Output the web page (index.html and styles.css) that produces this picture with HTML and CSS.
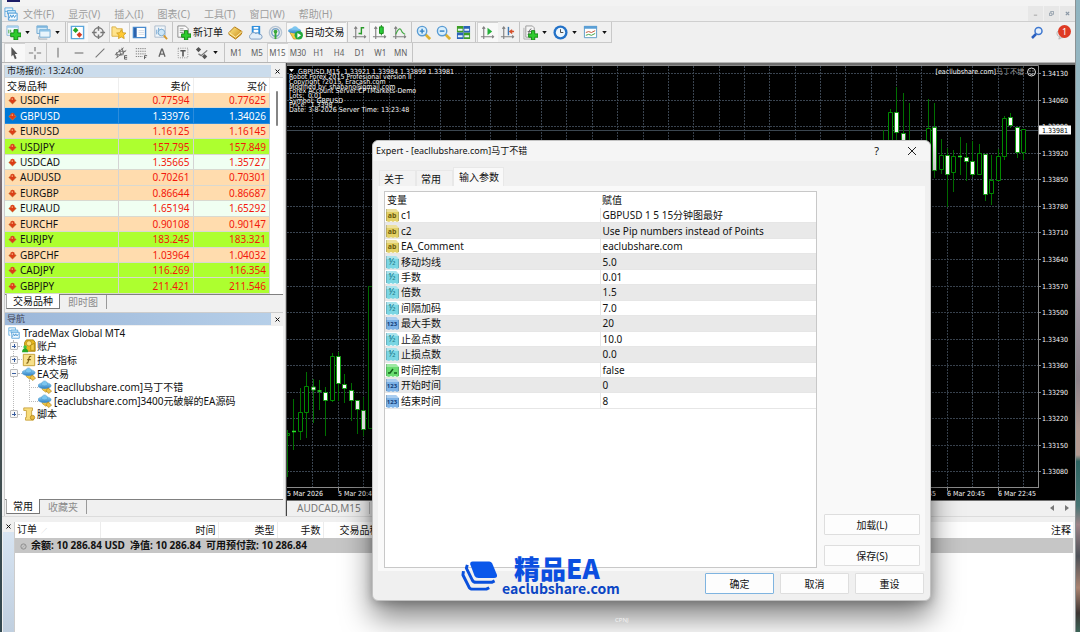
FILE: index.html
```html
<!DOCTYPE html>
<html lang="zh-CN">
<head>
<meta charset="utf-8">
<title>TradeMax Global MT4</title>
<link rel="stylesheet" href="styles.css">
</head>
<body>
<svg class="defs" aria-hidden="true">
  <defs>
    <linearGradient id="gGold" x1="0" y1="0" x2="1" y2="1"><stop offset="0" stop-color="#ffe98a"/><stop offset="1" stop-color="#c98a12"/></linearGradient>
    <linearGradient id="gBlue" x1="0" y1="0" x2="0" y2="1"><stop offset="0" stop-color="#8fd0f5"/><stop offset="1" stop-color="#2b7fc4"/></linearGradient>
    <symbol id="i-app" viewBox="0 0 16 16"><path d="M1 1h9v4H1zM1 5v6h2" fill="#e6f4fd" stroke="#5aa6dc"/><path d="M4 4h9v4H4z" fill="#bfe2f7" stroke="#5aa6dc"/><path d="M5 7h10v8H5z" fill="#f4fbff" stroke="#3f92d2"/><path d="M6 13l1.500-4 1.500 3 1.500-3 1.500 3 2-3" fill="none" stroke="#3f92d2"/></symbol>
    <symbol id="i-newchart" viewBox="0 0 16 16"><path d="M1 1h12v10H1z" fill="#f3faff" stroke="#8fb9d8"/><path d="M1 1h12v2H1z" fill="#a5cfec"/><path d="M3 9V5M5 8V5" stroke="#3aa33a"/><path d="M8.500 5h4v3.500H16v4h-3.500V16h-4v-3.500H5v-4h3.500z" fill="#2ecb2e" stroke="#118511"/></symbol>
    <symbol id="i-profiles" viewBox="0 0 16 16"><path d="M1 1h11v8H1z" fill="#d5ebf8" stroke="#6fa8d0"/><path d="M1 1h11v2H1z" fill="#7db5dd"/><path d="M4 5h11v8H4z" fill="#e9f5fc" stroke="#6fa8d0"/><path d="M4 5h11v2H4z" fill="#8cc2e6"/><path d="M3 12v3h9" fill="none" stroke="#9faab2"/></symbol>
    <symbol id="i-market" viewBox="0 0 16 16"><path d="M1.500 1.500h13v13h-13z" fill="#fff" stroke="#5aa6dc" stroke-width="1.500"/><path d="M6 2.500l3 3-3 3-3-3z" fill="#25a525"/><path d="M10 7.500l3 3-3 3-3-3z" fill="#d63d22"/></symbol>
    <symbol id="i-target" viewBox="0 0 16 16"><circle cx="8" cy="8" r="5" fill="none" stroke="#777" stroke-width="1.500"/><path d="M8 1v5M8 10v5M1 8h5M10 8h5" stroke="#777" stroke-width="1.500"/></symbol>
    <symbol id="i-folderstar" viewBox="0 0 16 16"><path d="M1 2h4l1 2h6v8H1z" fill="#ffe38c" stroke="#d9b04a"/><path d="M11 5l1.600 3.200 3.400.4-2.500 2.400.6 3.500-3.100-1.700-3.100 1.700.6-3.500L6 8.600l3.400-.4z" fill="#ffc933" stroke="#c8961b" stroke-width=".8"/></symbol>
    <symbol id="i-window" viewBox="0 0 16 16"><path d="M1.500 2.500h13v11h-13z" fill="#fff" stroke="#4a8ccf" stroke-width="1.500"/><path d="M2 3h3v10H2z" fill="#2b62ad"/><path d="M7 6h6M7 8h6M7 10h6" stroke="#d5dde5"/></symbol>
    <symbol id="i-tester" viewBox="0 0 16 16"><path d="M2 1h11v12H2z" fill="#f0f5f9" stroke="#abc"/><path d="M4 10V5M6 9V3M9 8V4" stroke="#6ba3d2"/><circle cx="9" cy="8" r="3.500" fill="#cce6f8" stroke="#7ba9cc"/><path d="M11.500 11l3.500 4" stroke="#d79a2d" stroke-width="2"/></symbol>
    <symbol id="i-order" viewBox="0 0 16 16"><path d="M2 1h8l3 3v9H2z" fill="#fafafa" stroke="#888"/><path d="M4 4h4M4 6h6M4 8h4" stroke="#999"/><path d="M9 6h3.500v3.500H16V13h-3.500v3H9v-3H6V9.500h3z" fill="#2ecb2e" stroke="#118511"/></symbol>
    <symbol id="i-gold" viewBox="0 0 16 16"><path d="M1 8l6-6 8 5-1 3-6 5-7-5z" fill="url(#gGold)" stroke="#b27408"/><path d="M1 8l7 5 7-6" fill="none" stroke="#fff0b0"/></symbol>
    <symbol id="i-cloud" viewBox="0 0 16 16"><path d="M4 1h9v9H4z" fill="#2f8fdd"/><path d="M6 2h5v2H6zM6 5h5v3H6z" fill="#fff"/><path d="M3 15a3 3 0 0 1 0-5 3 3 0 0 1 5-1 3 3 0 0 1 4 1 2.500 2.500 0 0 1 1 5z" fill="#e2eef8" stroke="#7c9cc0"/></symbol>
    <symbol id="i-signal" viewBox="0 0 16 16"><g fill="none" stroke-width="1.500"><circle cx="8" cy="8" r="6.500" stroke="#b7c5d3"/><circle cx="8" cy="8" r="4" stroke="#7ba4c9"/></g><circle cx="8" cy="7" r="2" fill="#38a838"/><path d="M8 8v7" stroke="#38a838" stroke-width="2"/></symbol>
    <symbol id="i-ea" viewBox="0 0 16 16"><path d="M5 8h6l2 3-4 3-4-3z" fill="#f5c842" stroke="#b98a1b" stroke-width=".7"/><ellipse cx="7.500" cy="6.500" rx="7.500" ry="3.500" fill="url(#gBlue)" stroke="#4b92c4" stroke-width=".5"/><path d="M4 5.500c0-6 7-6 7 0-2 1.500-5 1.500-7 0z" fill="#7cc6f0" stroke="#4b92c4" stroke-width=".5"/><path d="M11.500 9l4 3.500-3 3-3.500-3z" fill="#efc24a" stroke="#a87c15" stroke-width=".7"/></symbol>
    <symbol id="i-auto" viewBox="0 0 16 16"><path d="M2 8h10l-2 7H6z" fill="#f7cb45" stroke="#b98a1b" stroke-width=".7"/><ellipse cx="7" cy="6" rx="7" ry="3" fill="url(#gBlue)"/><path d="M4 5c0-5 7-5 7 0z" fill="#7cc6f0"/><circle cx="11.500" cy="11" r="4.500" fill="#22a93c"/><path d="M10 8.500l4 2.500-4 2.500z" fill="#fff"/></symbol>
    <symbol id="i-axes" viewBox="0 0 16 16"><path d="M4 2v13M1 12.500h14M2.500 4L4 2l1.500 2M13 11l1.500 1.500L13 14" fill="none" stroke="#808080" stroke-width="1.200"/></symbol>
    <symbol id="i-bars" viewBox="0 0 16 16"><use href="#i-axes"/><path d="M10 2v8M10 3h3M7 9h3" stroke="#2a9a2a" stroke-width="1.500"/></symbol>
    <symbol id="i-candle" viewBox="0 0 16 16"><use href="#i-axes"/><path d="M10 0v11" stroke="#1a8a1a"/><path d="M8 2h4v7H8z" fill="#29cc3a" stroke="#1a8a1a"/></symbol>
    <symbol id="i-line" viewBox="0 0 16 16"><use href="#i-axes"/><path d="M4 10c3-7 5-7 6-4s3 3 4 4" fill="none" stroke="#43a843" stroke-width="1.300"/></symbol>
    <symbol id="i-zoomin" viewBox="0 0 16 16"><path d="M10 10l5 5" stroke="#ddb12f" stroke-width="3"/><circle cx="6.500" cy="6.500" r="5" fill="#d9effc" stroke="#5a9cd4" stroke-width="1.500"/><path d="M4 6.500h5M6.500 4v5" stroke="#2f7fc4" stroke-width="1.500"/></symbol>
    <symbol id="i-zoomout" viewBox="0 0 16 16"><path d="M10 10l5 5" stroke="#ddb12f" stroke-width="3"/><circle cx="6.500" cy="6.500" r="5" fill="#d9effc" stroke="#5a9cd4" stroke-width="1.500"/><path d="M4 6.500h5" stroke="#2f7fc4" stroke-width="1.500"/></symbol>
    <symbol id="i-tile" viewBox="0 0 16 16"><path d="M1 1h7v7H1zM8 8h7v7H8z" fill="#3c9e25"/><path d="M8 1h7v7H8zM1 8h7v7H1z" fill="#2a62b8"/><path d="M2 4h5v2H2zM9 4h5v2H9zM2 11h5v2H2zM9 11h5v2H9z" fill="#e9f4fb"/></symbol>
    <symbol id="i-scroll" viewBox="0 0 16 16"><use href="#i-axes"/><path d="M8 3l5 4-5 4z" fill="#26b03a"/></symbol>
    <symbol id="i-shift" viewBox="0 0 16 16"><use href="#i-axes"/><path d="M9 2v9" stroke="#3a78b5" stroke-width="1.500"/><path d="M15 7h-4M13 5l-2.500 2 2.500 2" fill="none" stroke="#d6502b" stroke-width="1.500"/></symbol>
    <symbol id="i-indic" viewBox="0 0 16 16"><path d="M3 1h7l2 2v10H3z" fill="#f5f5f5" stroke="#999"/><path d="M1 3v12h8" fill="none" stroke="#aaa"/><path d="M5 10c2 0 1-6 4-6M5 7h4" fill="none" stroke="#666"/><path d="M9 6h3.500v3.500H16V13h-3.500v3H9v-3H6V9.500h3z" fill="#2ecb2e" stroke="#118511"/></symbol>
    <symbol id="i-clock" viewBox="0 0 16 16"><circle cx="8" cy="8" r="7.500" fill="#2372c8"/><circle cx="8" cy="8" r="5" fill="#eef7fd"/><path d="M8 4.500V8h3" fill="none" stroke="#444"/></symbol>
    <symbol id="i-template" viewBox="0 0 16 16"><path d="M1.500 1.500h13v12h-13z" fill="#fff" stroke="#5b9ac6"/><path d="M1 1h14v3H1z" fill="#5b9fd5"/><path d="M3 8l3-1 3 1 4-2" fill="none" stroke="#c05030"/><path d="M3 11l3-1 3 1 4-2" fill="none" stroke="#3c9e3c"/></symbol>
    <symbol id="i-pointer" viewBox="0 0 16 16"><path d="M5 1l7 8H9l2 5-2 1-2-5-2 2z" fill="#555"/></symbol>
    <symbol id="i-cross" viewBox="0 0 16 16"><path d="M8 1v5M8 10v5M1 8h5M10 8h5" stroke="#777" stroke-width="1.300"/></symbol>
    <symbol id="i-vline" viewBox="0 0 16 16"><path d="M8 2v11" stroke="#777" stroke-width="1.300"/></symbol>
    <symbol id="i-hline" viewBox="0 0 16 16"><path d="M3 8h10" stroke="#777" stroke-width="1.300"/></symbol>
    <symbol id="i-trend" viewBox="0 0 16 16"><path d="M3 13L13 3" stroke="#777" stroke-width="1.300"/></symbol>
    <symbol id="i-channel" viewBox="0 0 16 16"><path d="M1 10L11 2M2 14L14 5M3 7l1 6M6 4l2 7M9 2l2 7M2 10h9M5 6h8" stroke="#666"/><path d="M15 11h-3v4h3M12 13h3" fill="none" stroke="#555"/></symbol>
    <symbol id="i-fib" viewBox="0 0 16 16"><path d="M2 3h12M2 6h12M2 9h12M2 12h8" stroke="#777" stroke-dasharray="1.500 1"/><path d="M12 15v-4h3M12 13h2" fill="none" stroke="#555"/></symbol>
    <symbol id="i-text" viewBox="0 0 16 16"><path d="M4 13L7.500 3h1L12 13M5.500 9.500h5" fill="none" stroke="#666" stroke-width="1.800"/></symbol>
    <symbol id="i-label" viewBox="0 0 16 16"><path d="M2.500 2.500h11v11h-11z" fill="none" stroke="#777" stroke-dasharray="1 1.500"/><path d="M5 5.500h6M8 5.500V12" stroke="#555" stroke-width="1.800"/></symbol>
    <symbol id="i-arrows" viewBox="0 0 16 16"><path d="M4 1l3 3-3 3-3-3zM11 9l3 3-3 3-3-3z" fill="#555"/><path d="M4 9l3 2 7-6" fill="none" stroke="#777" stroke-width="1.500"/></symbol>
    <symbol id="i-caret" viewBox="0 0 6 4"><path d="M0 0h6L3 4z" fill="#111"/></symbol>
    <symbol id="i-down" viewBox="0 0 10 10"><path d="M5 .5L9.500 5 5 9.500.5 5z" fill="#c9793f"/><path d="M3 1.500h4v3h2L5 8.500 1 4.500h2z" fill="#dc3c16"/><path d="M4 2.500h1.500v2H4z" fill="#f79a6c"/></symbol>
    <symbol id="i-x" viewBox="0 0 10 10"><path d="M1 1l8 8M9 1L1 9" fill="none" stroke="currentColor" stroke-width="2"/></symbol>
    <symbol id="i-user" viewBox="0 0 16 16"><path d="M5 1h8l2 3v10H6L3 10V4z" fill="#e8b81d" stroke="#a17a08"/><circle cx="8" cy="5" r="3" fill="#ffe37a" stroke="#a17a08" stroke-width=".7"/><path d="M10 7l4-2v8h-4z" fill="#f2ce4a" stroke="#a17a08" stroke-width=".7"/><circle cx="3.500" cy="9" r="2" fill="#3fc63f"/><path d="M0 15c0-6 7-6 7 0z" fill="#27a827"/></symbol>
    <symbol id="i-fx" viewBox="0 0 16 16"><path d="M1.500 1.500h13v13h-13z" fill="#f7e08a" stroke="#c29a2a"/><path d="M10.500 4c-2-1-2.500 1-3 4s-1 4-2.500 3.500M6 7.500h4" fill="none" stroke="#7a5c10" stroke-width="1.300"/></symbol>
    <symbol id="i-script" viewBox="0 0 16 16"><path d="M2 1h10v3h-1v8h2v3H4v-3h1V4H2z" fill="#f7dc7c" stroke="#c8a03a"/><circle cx="12" cy="12" r="2.500" fill="#e9b93c" stroke="#a87c15" stroke-width=".8"/></symbol>
    <symbol id="i-file" viewBox="0 0 13 13"><path d="M0 0h10l3 3v9l-2 1-2-1-2 1-2-1-2 1-3-1z" fill="currentColor"/><path d="M0 0h10l3 3H0z" fill="#fff" fill-opacity=".35"/><path d="M.5 0v12M12.500 3v9" fill="none" stroke="#234" stroke-opacity=".22"/></symbol>
  </defs>
</svg>

<div class="desktop">
  <div class="wall wall-left"></div>
  <main class="app">
    <div class="titlebar"><span class="title-icon"></span></div>

    <div class="menubar">
      <svg class="ico14"><use href="#i-app"/></svg>
      <nav class="menus">
        <button>文件(F)</button><button>显示(V)</button><button>插入(I)</button><button>图表(C)</button><button>工具(T)</button><button>窗口(W)</button><button>帮助(H)</button>
      </nav>
      <div class="mdi">
        <button aria-label="最小化"><svg viewBox="0 0 6 6"><path d="M1 5h4" stroke="#999"/></svg></button>
        <button aria-label="还原"><svg viewBox="0 0 6 6"><path d="M.5 2.500h3v3h-3zM2 2V.5h3.500V4H4" fill="none" stroke="#8a97a5"/></svg></button>
        <button aria-label="关闭"><svg viewBox="0 0 6 6"><path d="M1 1l4 4M5 1L1 5" stroke="#8a97a5" stroke-width="1.500"/></svg></button>
      </div>
    </div>

    <div class="tools">
      <div class="toolbar bar-top">
        <button class="drop" aria-label="新图表"><svg class="ico"><use href="#i-newchart"/></svg><svg class="caret"><use href="#i-caret"/></svg></button>
        <button class="drop" aria-label="配置文件"><svg class="ico"><use href="#i-profiles"/></svg><svg class="caret"><use href="#i-caret"/></svg></button>
        <i class="sep"></i>
        <div class="group g-panels">
          <button class="on" aria-label="市场报价"><svg class="ico"><use href="#i-market"/></svg></button>
          <button aria-label="数据窗口"><svg class="ico"><use href="#i-target"/></svg></button>
          <button class="on" aria-label="导航"><svg class="ico"><use href="#i-folderstar"/></svg></button>
          <button class="on" aria-label="终端"><svg class="ico"><use href="#i-window"/></svg></button>
          <button aria-label="策略测试"><svg class="ico"><use href="#i-tester"/></svg></button>
        </div>
        <i class="sep"></i>
        <button class="wide"><svg class="ico"><use href="#i-order"/></svg>新订单</button>
        <div class="group g-three">
          <button aria-label="MetaEditor"><svg class="ico"><use href="#i-gold"/></svg></button>
          <button aria-label="云"><svg class="ico"><use href="#i-cloud"/></svg></button>
          <button aria-label="信号"><svg class="ico"><use href="#i-signal"/></svg></button>
        </div>
        <button class="wide auto on"><svg class="ico"><use href="#i-auto"/></svg>自动交易</button>
        <i class="sep"></i>
        <div class="group g-three">
          <button aria-label="柱状图"><svg class="ico"><use href="#i-bars"/></svg></button>
          <button class="on" aria-label="阴阳烛"><svg class="ico"><use href="#i-candle"/></svg></button>
          <button aria-label="折线图"><svg class="ico"><use href="#i-line"/></svg></button>
        </div>
        <i class="sep"></i>
        <div class="group g-three">
          <button aria-label="放大"><svg class="ico"><use href="#i-zoomin"/></svg></button>
          <button aria-label="缩小"><svg class="ico"><use href="#i-zoomout"/></svg></button>
          <button aria-label="平铺"><svg class="ico"><use href="#i-tile"/></svg></button>
        </div>
        <i class="sep"></i>
        <div class="group g-two">
          <button class="on" aria-label="自动滚动"><svg class="ico"><use href="#i-scroll"/></svg></button>
          <button aria-label="图表平移"><svg class="ico"><use href="#i-shift"/></svg></button>
        </div>
        <i class="sep"></i>
        <button class="drop" aria-label="指标"><svg class="ico"><use href="#i-indic"/></svg><svg class="caret"><use href="#i-caret"/></svg></button>
        <button class="drop" aria-label="周期"><svg class="ico"><use href="#i-clock"/></svg><svg class="caret"><use href="#i-caret"/></svg></button>
        <button class="drop" aria-label="模板"><svg class="ico"><use href="#i-template"/></svg><svg class="caret"><use href="#i-caret"/></svg></button>
      </div>
      <div class="tool-end">
        <button aria-label="搜索"><svg class="ico14" viewBox="0 0 14 14"><circle cx="8.500" cy="5" r="3.500" fill="#e8f1fc" stroke="#3f78cf" stroke-width="1.500"/><path d="M6 8l-4 4" stroke="#2a5fc0" stroke-width="2.500"/></svg></button>
        <button class="chat" aria-label="消息"><svg class="ico" viewBox="0 0 16 16"><ellipse cx="7" cy="9" rx="6" ry="4.500" fill="#f0f0f0" stroke="#b5b5b5"/><path d="M4 12l-1 3 4-2" fill="#ddd" stroke="#b5b5b5"/></svg><span class="badge">1</span></button>
      </div>
    </div>

    <div class="toolbar bar-low">
      <div class="group g-two">
        <button class="on" aria-label="光标"><svg class="ico14"><use href="#i-pointer"/></svg></button>
        <button aria-label="十字准线"><svg class="ico14"><use href="#i-cross"/></svg></button>
      </div>
      <i class="sep"></i>
      <div class="group g-draw">
        <button aria-label="垂直线"><svg class="ico14"><use href="#i-vline"/></svg></button>
        <button aria-label="水平线"><svg class="ico14"><use href="#i-hline"/></svg></button>
        <button aria-label="趋势线"><svg class="ico14"><use href="#i-trend"/></svg></button>
        <button aria-label="通道"><svg class="ico14"><use href="#i-channel"/></svg></button>
        <button aria-label="斐波那契"><svg class="ico14"><use href="#i-fib"/></svg></button>
        <button aria-label="文本"><svg class="ico12"><use href="#i-text"/></svg></button>
        <button aria-label="文本标签"><svg class="ico14"><use href="#i-label"/></svg></button>
      </div>
      <button class="drop" aria-label="箭头"><svg class="ico14"><use href="#i-arrows"/></svg><svg class="caret"><use href="#i-caret"/></svg></button>
      <i class="sep"></i>
      <div class="group g-time">
        <button>M1</button><button>M5</button><button class="on">M15</button><button>M30</button><button>H1</button><button>H4</button><button>D1</button><button>W1</button><button>MN</button>
      </div>
      <i class="sep"></i>
    </div>

    <div class="work">
      <aside class="side">
        <section class="panel">
          <header class="cap cap-soft"><span>市场报价: 13:24:00</span><button aria-label="关闭"><svg><use href="#i-x"/></svg></button></header>
          <div class="quotes-wrap">
            <table class="quotes">
              <thead><tr><th>交易品种</th><th>卖价</th><th>买价</th></tr></thead>
              <tbody>
                <tr class="peach"><td><svg><use href="#i-down"/></svg>USDCHF</td><td>0.77594</td><td>0.77625</td></tr>
                <tr class="sel"><td><svg><use href="#i-down"/></svg>GBPUSD</td><td>1.33976</td><td>1.34026</td></tr>
                <tr class="peach"><td><svg><use href="#i-down"/></svg>EURUSD</td><td>1.16125</td><td>1.16145</td></tr>
                <tr class="lime"><td><svg><use href="#i-down"/></svg>USDJPY</td><td>157.795</td><td>157.849</td></tr>
                <tr class="mint"><td><svg><use href="#i-down"/></svg>USDCAD</td><td>1.35665</td><td>1.35727</td></tr>
                <tr class="peach"><td><svg><use href="#i-down"/></svg>AUDUSD</td><td>0.70261</td><td>0.70301</td></tr>
                <tr class="peach"><td><svg><use href="#i-down"/></svg>EURGBP</td><td>0.86644</td><td>0.86687</td></tr>
                <tr class="mint"><td><svg><use href="#i-down"/></svg>EURAUD</td><td>1.65194</td><td>1.65292</td></tr>
                <tr class="peach"><td><svg><use href="#i-down"/></svg>EURCHF</td><td>0.90108</td><td>0.90147</td></tr>
                <tr class="lime"><td><svg><use href="#i-down"/></svg>EURJPY</td><td>183.245</td><td>183.321</td></tr>
                <tr class="peach"><td><svg><use href="#i-down"/></svg>GBPCHF</td><td>1.03964</td><td>1.04032</td></tr>
                <tr class="lime"><td><svg><use href="#i-down"/></svg>CADJPY</td><td>116.269</td><td>116.354</td></tr>
                <tr class="lime"><td><svg><use href="#i-down"/></svg>GBPJPY</td><td>211.421</td><td>211.546</td></tr>
              </tbody>
            </table>
            <div class="scroll"><span></span></div>
          </div>
          <div class="tabs"><button class="on">交易品种</button><button>即时图</button></div>
        </section>

        <section class="panel navigator">
          <header class="cap cap-hard"><span>导航</span><button aria-label="关闭"><svg><use href="#i-x"/></svg></button></header>
          <ul class="tree">
            <li class="root"><svg class="ico12"><use href="#i-app"/></svg>TradeMax Global MT4</li>
            <li class="lv1"><b class="exp plus"></b><svg class="ico14"><use href="#i-user"/></svg>账户</li>
            <li class="lv1"><b class="exp plus"></b><svg class="ico14"><use href="#i-fx"/></svg>技术指标</li>
            <li class="lv1"><b class="exp"></b><svg class="ico14"><use href="#i-ea"/></svg>EA交易</li>
            <li class="lv2"><svg class="ico14"><use href="#i-ea"/></svg>[eacllubshare.com]马丁不错</li>
            <li class="lv2 last"><svg class="ico14"><use href="#i-ea"/></svg>[eaclubshare.com]3400元破解的EA源码</li>
            <li class="lv1 last"><b class="exp plus"></b><svg class="ico14"><use href="#i-script"/></svg>脚本</li>
          </ul>
          <div class="tabs"><button class="on">常用</button><button>收藏夹</button></div>
        </section>
      </aside>

      <section class="chart">
        <svg class="plot" viewBox="287 65 788 435" preserveAspectRatio="xMinYMin slice" role="img" aria-label="GBPUSD,M15">
          <path fill="#000" d="M287 65h800v435H287z"/>
          <g class="grid">
            <path d="M312.500 66V488M338.500 66V488M363.500 66V488M389.500 66V488M414.500 66V488M440.500 66V488M465.500 66V488M490.500 66V488M516.500 66V488M541.500 66V488M566.500 66V488M592.500 66V488M617.500 66V488M643.500 66V488M668.500 66V488M693.500 66V488M719.500 66V488M744.500 66V488M769.500 66V488M795.500 66V488M820.500 66V488M845.500 66V488M871.500 66V488M896.500 66V488M921.500 66V488M947.500 66V488M972.500 66V488M998.500 66V488M1023.500 66V488"/>
            <path d="M287 73.500H1038M287 100.500H1038M287 126.500H1038M287 153.500H1038M287 179.500H1038M287 206.500H1038M287 232.500H1038M287 259.500H1038M287 286.500H1038M287 312.500H1038M287 339.500H1038M287 365.500H1038M287 392.500H1038M287 418.500H1038M287 445.500H1038M287 471.500H1038"/>
          </g>
          <path class="bid" d="M287 130.500H1038"/>
          <path class="wick" d="M287.500 430V477M293.500 399V450M300.500 388V440M306.500 372V438M313.500 379V423M319.500 380V410M325.500 387V436M332.500 353V402M338.500 352V401M344.500 374V403M351.500 383V421M357.500 400V434M363.500 397V436M883.500 130V141M890.500 109V141M896.500 87V141M903.500 93V141M909.500 103V141M928.500 99V180M934.500 103V178M941.500 139V174M947.500 148V207M953.500 150V192M960.500 137V175M966.500 143V181M972.500 141V177M979.500 144V175M985.500 154V201M991.500 155V205M998.500 149V181M1004.500 116V160M1010.500 113V128M1017.500 127V158M1023.500 129V160"/>
          <path class="up" d="M287.500 433.500h2v2h-2zM298.500 412.500h4v19h-4zM304.500 386.500h4v26h-4zM330.500 356.500h4v44h-4zM368.500 286.500h4v142h-4zM888.500 112.500h4v29h-4zM926.500 128.500h4v50h-4zM939.500 155.500h4v14h-4zM951.500 156.500h4v16h-4zM977.500 153.500h4v21h-4zM989.500 180.500h4v13h-4zM996.500 156.500h4v24h-4zM1002.500 118.500h4v38h-4zM1021.500 129.500h4v23h-4z"/>
          <path class="doji" d="M292 431.500h4M317.500 391h4M958 156.500h4"/>
          <path class="down" d="M311.500 387h4v3h-4zM323.500 392.500h4v8h-4zM336.500 356.500h4v27h-4zM342.500 384.500h4v4h-4zM349.500 390.500h4v10h-4zM355.500 400.500h4v9h-4zM361.500 410.500h4v19h-4zM894.500 112.500h4v20h-4zM901.500 133.500h4v8h-4zM932.500 127.500h4v43h-4zM945.500 155.500h4v19h-4zM964.500 157.500h4v4h-4zM970.500 161.500h4v13h-4zM983.500 154.500h4v40h-4zM1008.500 117.500h4v8h-4zM1015.500 127.500h4v25h-4z"/>
          <path d="M287 65.500H1038.500V488M287 487.500H1038.500M1038 73.500h3M1038 100.500h3M1038 126.500h3M1038 153.500h3M1038 179.500h3M1038 206.500h3M1038 232.500h3M1038 259.500h3M1038 286.500h3M1038 312.500h3M1038 339.500h3M1038 365.500h3M1038 392.500h3M1038 418.500h3M1038 445.500h3M1038 471.500h3M338.500 488v3M947.500 488v3M998.500 488v3" fill="none" stroke="#8a8a8a"/>
          <g class="ctext">
            <path d="M289 69h5l-2.500 3z" fill="#fff"/>
            <text x="298" y="74" xml:space="preserve">GBPUSD,M15  1.33921 1.33984 1.33899 1.33981</text>
            <text x="289" y="79">Robot Forex 2015 Profesional version II</text>
            <text x="289" y="84">Copyright ?2015, Eracash.com</text>
            <text x="289" y="89">Modified by: shabano@gmail.com</text>
            <text x="289" y="93">Forex Account Server:CPTMarkets-Demo</text>
            <text x="289" y="98" xml:space="preserve">Lots:  0.01</text>
            <text x="289" y="103">Symbol: GBPUSD</text>
            <text x="289" y="107" xml:space="preserve">Price:  1.3398</text>
            <text x="289" y="112">Date: 3-8-2026 Server Time: 13:23:48</text>
            <text x="1024" y="74" text-anchor="end">[eacllubshare.com]<tspan class="faint">马丁不错</tspan></text>
            <text x="1042" y="76">1.34130</text><text x="1042" y="103">1.34060</text><text x="1042" y="129">1.33990</text>
            <text x="1042" y="156">1.33920</text><text x="1042" y="182">1.33850</text><text x="1042" y="209">1.33780</text>
            <text x="1042" y="235">1.33710</text><text x="1042" y="262">1.33640</text><text x="1042" y="289">1.33570</text>
            <text x="1042" y="315">1.33500</text><text x="1042" y="342">1.33430</text><text x="1042" y="368">1.33360</text>
            <text x="1042" y="395">1.33290</text><text x="1042" y="421">1.33220</text><text x="1042" y="448">1.33150</text>
            <text x="1042" y="474">1.33080</text>
            <path d="M1039 125.500h32v9h-32z" fill="#fff"/>
            <text x="1042" y="133" class="now">1.33981</text>
            <text x="287" y="496">5 Mar 2026</text><text x="338" y="496">5 Mar 20:45</text>
            <text x="936" y="496" text-anchor="end">6 Mar 18:45</text>
            <text x="947" y="496">6 Mar 20:45</text><text x="998" y="496">6 Mar 22:45</text>
          </g>
          <g fill="none" stroke="#ddd"><circle cx="1031.500" cy="72" r="4"/><path d="M1029.500 73.500q2 2 4 0M1029.500 71h1M1032.500 71h1"/></g>
        </svg>
        <div class="chart-tabs"><button>AUDCAD,M15</button><span class="arrows"><svg viewBox="0 0 4 6"><path d="M4 0v6L0 3z" fill="#777"/></svg><svg viewBox="0 0 4 6"><path d="M0 0v6l4-3z" fill="#777"/></svg></span></div>
      </section>
    </div>

    <section class="terminal">
      <div class="term-edge"><button aria-label="关闭"><svg><use href="#i-x"/></svg></button><span></span></div>
      <div class="term-main">
        <table class="orders">
          <colgroup><col class="c1"><col class="c2"><col class="c3"><col class="c4"><col class="c5"><col></colgroup>
          <thead><tr><th>订单<small>∕</small></th><th>时间</th><th>类型</th><th>手数</th><th>交易品种</th><th>注释</th></tr></thead>
          <tbody><tr><td colspan="6"><svg viewBox="0 0 8 8"><circle cx="4" cy="4" r="3" fill="#c4c4c4" stroke="#888"/><path d="M2.500 5.500l3-3" stroke="#aaa"/></svg>余额: 10 286.84 USD&nbsp; 净值: 10 286.84&nbsp; 可用预付款: 10 286.84</td></tr></tbody>
        </table>
      </div>
    </section>
  </main>
  <div class="wall wall-right"></div>
</div>

<div class="dialog" role="dialog" aria-labelledby="dlg-title">
  <header class="dlg-head">
    <h1 id="dlg-title">Expert - [eacllubshare.com]马丁不错</h1>
    <button class="help" aria-label="帮助">?</button>
    <button class="close" aria-label="关闭"><svg viewBox="0 0 10 10"><path d="M1 1l8 8M9 1L1 9" stroke="#222"/></svg></button>
  </header>
  <div class="dlg-tabs"><button>关于</button><button>常用</button><button class="on">输入参数</button></div>
  <div class="page">
    <div class="params-box">
      <table class="params">
        <thead><tr><th>变量</th><th>赋值</th></tr></thead>
        <tbody>
          <tr><td><svg class="f-str"><use href="#i-file"/><text x="6" y="9">ab</text></svg>c1</td><td>GBPUSD 1 5 15分钟图最好</td></tr>
          <tr><td><svg class="f-str"><use href="#i-file"/><text x="6" y="9">ab</text></svg>c2</td><td>Use Pip numbers instead of Points</td></tr>
          <tr><td><svg class="f-str"><use href="#i-file"/><text x="6" y="9">ab</text></svg>EA_Comment</td><td>eaclubshare.com</td></tr>
          <tr><td><svg class="f-dbl"><use href="#i-file"/><text x="6" y="9">½</text></svg>移动均线</td><td>5.0</td></tr>
          <tr><td><svg class="f-dbl"><use href="#i-file"/><text x="6" y="9">½</text></svg>手数</td><td>0.01</td></tr>
          <tr><td><svg class="f-dbl"><use href="#i-file"/><text x="6" y="9">½</text></svg>倍数</td><td>1.5</td></tr>
          <tr><td><svg class="f-dbl"><use href="#i-file"/><text x="6" y="9">½</text></svg>间隔加码</td><td>7.0</td></tr>
          <tr><td><svg class="f-int"><use href="#i-file"/><text x="6" y="9">123</text></svg>最大手数</td><td>20</td></tr>
          <tr><td><svg class="f-dbl"><use href="#i-file"/><text x="6" y="9">½</text></svg>止盈点数</td><td>10.0</td></tr>
          <tr><td><svg class="f-dbl"><use href="#i-file"/><text x="6" y="9">½</text></svg>止损点数</td><td>0.0</td></tr>
          <tr><td><svg class="f-bool"><use href="#i-file"/><path d="M2 9h2l3-4M8 9h3" fill="none" stroke="#14601c" stroke-width="1.500"/></svg>时间控制</td><td>false</td></tr>
          <tr><td><svg class="f-int"><use href="#i-file"/><text x="6" y="9">123</text></svg>开始时间</td><td>0</td></tr>
          <tr><td><svg class="f-int"><use href="#i-file"/><text x="6" y="9">123</text></svg>结束时间</td><td>8</td></tr>
        </tbody>
      </table>
    </div>
    <div class="page-actions"><button class="btn">加载(L)</button><button class="btn">保存(S)</button></div>
  </div>
  <footer class="dlg-foot"><button class="btn primary">确定</button><button class="btn">取消</button><button class="btn">重设</button></footer>
  <div class="brand">
    <svg viewBox="0 0 38 32"><path d="M12 1h17q2 0 3 2l5 12q.5 3-3 3H18q-3 0-4-2L9.500 4Q9 1 12 1z" fill="#0a57ea"/><g fill="none" stroke="#0a50dc" stroke-width="3" stroke-linejoin="round"><path d="M6.500 4.500L5.500 8l6 12q1 2.500 4 2.500h16l3-1.500"/><path d="M2.500 11L2 15l6 12q1 2.500 4 2.500h14l3-1.500"/></g></svg>
    <div><strong>精品EA</strong><span>eaclubshare.com</span></div>
  </div>
</div>
<span class="mark">CPNJ</span>
</body>
</html>
```
FILE: styles.css
```css
* { box-sizing: border-box; }
html, body { height: 100%; margin: 0; }
body {
  position: relative;
  overflow: hidden;
  background: #f0f0f0;
  color: #111;
  font: 10px/14px "Noto Sans", "Noto Sans CJK SC", sans-serif;
}
button { margin: 0; padding: 0; border: 0; background: none; font: inherit; color: inherit; white-space: nowrap; }
table { border-collapse: collapse; border-spacing: 0; table-layout: fixed; }
th { font-weight: 400; }
th, td { padding: 0; white-space: nowrap; }
svg { display: block; flex: none; }
.defs { position: absolute; width: 0; height: 0; }
.ico { width: 15px; height: 15px; }
.ico14 { width: 14px; height: 14px; }
.ico12 { width: 12px; height: 12px; }

.desktop { display: flex; height: 100%; }
.wall-left { width: 2px; background: linear-gradient(#9db7c0, #8a7d86 20%, #5c4f4c 45%, #4a5352 60%, #32474f); }
.wall-right {
  width: 5px;
  border-left: 1px solid #8b9294;
  background: linear-gradient(#8fb4c0 0, #9db9c3 25%, #a9a0ad 45%, #8d838b 60%, #b39a92 68%, #b39a92 72%, #2d6361 73%, #477574 80%, #9c8387 83%, #4c5057 88%, #a98370 93%, #3d3533 97%, #3b6457);
}
.app { flex: 1; min-width: 0; display: flex; flex-direction: column; background: #f0f0f0; }

.titlebar { height: 6px; padding-left: 5px; background: #f3f3f3; }
.title-icon { display: block; width: 13px; height: 2px; background: #1b1b66; }

.menubar { display: flex; align-items: center; height: 16px; padding-left: 2px; border-bottom: 1px solid #cfcfcf; color: #9d9d9d; }
.menus { display: flex; flex: 1; gap: 14px; padding-left: 5px; }
.mdi { display: flex; align-self: stretch; gap: 1px; }
.mdi button { display: grid; place-items: center; width: 15px; background: #e7e7e7; }
.mdi svg { width: 5px; height: 5px; }

.tools { display: flex; justify-content: space-between; height: 21px; }
.toolbar { display: flex; align-items: stretch; padding-left: 2px; }
.toolbar button { display: flex; align-items: center; justify-content: center; }
.bar-top { border-right: 1px solid #c9c9c9; border-bottom: 1px solid #c9c9c9; }
.bar-low { height: 20px; border-bottom: 1px solid #b5b5b5; color: #5f5f5f; font-size: 8px; }
.toolbar .drop { width: 30px; gap: 4px; justify-content: flex-start; padding-left: 2px; }
.caret { width: 5px; height: 3px; }
.toolbar .on { background: #f8f8f8; box-shadow: inset 1px 1px #d2d2d2; }
.sep { width: 1px; margin: 0 1px; background: #c4c4c4; }
.group { display: flex; }
.group button { flex: 1; }
.g-panels { width: 104px; }
.g-three { width: 61px; }
.g-two { width: 41px; }
.g-draw { width: 145px; }
.g-time { width: 185px; }
.toolbar .wide { gap: 2px; width: 51px; }
.toolbar .auto { width: 60px; }
.tool-end { display: flex; gap: 12px; align-items: center; padding-right: 4px; }
.chat { position: relative; }
.badge { position: absolute; top: 0; right: 0; width: 13px; height: 13px; border-radius: 50%; background: #de3a24; color: #fff; font-size: 9px; line-height: 13px; text-align: center; }

.work { flex: none; display: flex; height: 453px; }
.side { width: 284px; padding: 2px 2px 0 2px; border-right: 1px solid #c9c9c9; }
.panel { display: flex; flex-direction: column; border-left: 1px solid #cdcdcd; }
.cap { display: flex; align-items: center; height: 12px; font-size: 9px; line-height: 12px; }
.cap span { flex: 1; padding-left: 2px; }
.cap button { display: grid; place-items: center; align-self: stretch; width: 12px; background: #f0f0f0; }
.cap svg { width: 5px; height: 5px; }
.cap-soft { background: #cbdcec; }
.cap-soft span { color: #222; }
.cap-hard { background: linear-gradient(90deg, #9cb7d9, #b7d0e9); }
.cap-hard span { color: #445; }
.quotes-wrap { display: flex; border-top: 1px solid #d5d5d5; background: #fff; }
.quotes { flex: 1; height: 216px; }
.quotes th { height: 15px; text-align: right; padding-right: 2px; border-right: 1px solid #eee; }
.quotes th:first-child { width: 113px; padding-left: 2px; text-align: left; }
.quotes th:nth-child(2) { width: 75px; }
.quotes td { color: #f3180c; text-align: right; padding-right: 3px; border-right: 1px solid #d4d4d4; border-bottom: 1px solid #d9d9d0; }
.quotes td:first-child { color: #111; text-align: left; padding-left: 3px; }
.quotes td svg { display: inline-block; width: 9px; height: 9px; margin-right: 3px; vertical-align: -1px; }
.peach { background: #ffdcae; }
.lime { background: #adff2f; }
.mint { background: #f0fff2; }
.quotes .sel td { background: #0078d7; color: #fff; border-color: #2b8cdc; }
.scroll { width: 13px; background: #fff; padding: 13px 0 0 6px; }
.scroll span { display: block; width: 2px; height: 35px; border-radius: 1px; background: #858585; }
.tabs { display: flex; height: 18px; padding-left: 1px; border-top: 1px solid #808080; align-items: flex-start; }
.tabs button { height: 14px; padding: 0 8px; color: #8c8c8c; border-right: 1px solid #999; line-height: 13px; }
.tabs .on { margin-top: -1px; height: 15px; padding: 0 6px; background: #fff; color: #111; border: 1px solid #777; border-top: 0; border-left-color: #aaa; line-height: 14px; }
.navigator { border-top: 1px solid #cdcdcd; }
.tree { position: relative; display: grid; grid-template-rows: repeat(7, 1fr); align-content: start; height: 173px; padding: 0 0 78px; margin: 1px 0 0; list-style: none; background: #fff; }
.tree li { position: relative; display: flex; align-items: center; gap: 2px; min-height: 0; }
.tree .root { padding-left: 3px; gap: 3px; }
.tree .lv1 { padding-left: 5px; gap: 1px; }
.tree .lv2 { padding-left: 33px; }
.exp { position: relative; width: 8px; height: 8px; margin-right: 3px; border: 1px solid #bbb; border-radius: 1px; background: linear-gradient(#3a5fa0, #3a5fa0) center / 4px 1px no-repeat, #f8f8f8; }
.plus { background: linear-gradient(#3a5fa0, #3a5fa0) center / 4px 1px no-repeat, linear-gradient(#3a5fa0, #3a5fa0) center / 1px 4px no-repeat, #f8f8f8; }
.tree .lv1::before { content: ""; position: absolute; left: 13px; width: 4px; border-top: 1px dotted #bbb; }
.tree .lv2::before { content: ""; position: absolute; left: 24px; top: 0; width: 8px; height: 7px; border-left: 1px dotted #bbb; border-bottom: 1px dotted #bbb; }
.tree .lv2.last::before { top: -7px; height: 14px; }
.tree::before { content: ""; position: absolute; left: 8px; top: 14px; height: 74px; border-left: 1px dotted #bbb; }

.chart { flex: 1; min-width: 0; display: flex; flex-direction: column; padding-top: 2px; background: #6f6f6f; border-left: 1px solid #444; }
.plot { flex: none; width: 100%; height: 435px; }
.grid path { fill: none; stroke: #3a4450; stroke-width: 1; stroke-dasharray: 2 1; }
.bid { stroke: #3d4852; }
.wick { fill: none; stroke: #007000; stroke-width: 1; }
.up { fill: #000; stroke: #008a00; }
.doji { stroke: #2be02b; stroke-width: 1.500; }
.down { fill: #fff; stroke: #14a014; }
.ctext text { fill: #f8f8f8; font-size: 7px; font-family: "DejaVu Sans Condensed", "Noto Sans", "Noto Sans CJK SC", sans-serif; }
.ctext .faint { fill: #9a9a9a; }
.ctext .now { fill: #000; }
.chart-tabs { flex: 1; display: flex; justify-content: space-between; align-items: center; margin-top: 1px; padding: 0 6px 2px 2px; background: #f0f0f0; color: #777; }
.chart-tabs button { padding: 0 8px; border-right: 1px solid #bbb; line-height: 12px; }
.arrows { display: flex; gap: 11px; }
.arrows svg { width: 4px; height: 6px; }

.terminal { flex: 1; min-height: 0; display: flex; padding: 5px 2px 0 1px; border-top: 1px solid #dcdcdc; }
.term-edge { display: flex; flex-direction: column; width: 11px; }
.term-edge button { display: grid; place-items: center; height: 8px; }
.term-edge svg { width: 5px; height: 5px; }
.term-edge span { flex: 1; margin-top: 2px; background: linear-gradient(#d7e4f2, #c0cfdf); }
.term-main { flex: 1; min-width: 0; border-left: 1px solid #ccc; background: #fff; }
.orders { width: 100%; }
.orders th { height: 15px; padding-right: 2px; text-align: right; border-right: 1px solid #ececec; }
.orders th:first-child { padding-left: 2px; text-align: left; }
.orders th:last-child { border-right: 0; }
.orders small { margin-left: 4px; color: #bbb; font-size: 6px; }
.c1 { width: 85px; } .c2 { width: 118px; } .c3 { width: 59px; } .c4 { width: 46px; } .c5 { width: 59px; }
.orders td { height: 15px; padding-left: 5px; background: #c6c6c6; font-weight: 700; line-height: 13px; }
.orders td svg { display: inline-block; width: 7px; height: 7px; margin-right: 4px; vertical-align: -1px; }
.mark { position: absolute; left: 615px; bottom: 8px; color: #f3f3f3; font-size: 6px; line-height: 8px; }

.dialog {
  position: absolute; left: 372px; top: 140px; width: 559px;
  display: flex; flex-direction: column;
  padding: 0 5px 6px 5px;
  border: 1px solid #c2c2c2; border-radius: 6px;
  background: #f0f0f0;
  box-shadow: 0 16px 30px rgba(0, 0, 0, .5), 0 2px 10px rgba(0, 0, 0, .22);
}
.dlg-head { display: flex; align-items: center; height: 20px; margin: 0 -5px; padding: 0 13px 0 3px; background: #f5f5f5; border-radius: 6px 6px 0 0; }
.dlg-head h1 { flex: 1; margin: 0; font-size: 9px; font-weight: 400; }
.dlg-head .help { margin-right: 28px; font-size: 11px; }
.close svg { width: 10px; height: 10px; }
.dlg-tabs { display: flex; align-items: flex-end; height: 25px; padding-left: 1px; }
.dlg-tabs button { width: 37px; height: 16px; text-align: left; padding: 0 0 0 4px; border: 1px solid #e8e8e8; border-bottom: 0; background: #f2f2f2; }
.dlg-tabs .on { width: 51px; height: 19px; padding: 0 0 1px 5px; background: #f9f9f9; }
.page { display: flex; gap: 7px; padding: 5px 5px 3px 6px; background: #f9f9f9; }
.params-box { flex: 1; height: 377px; border: 1px solid #c8c8c8; background: #fff; }
.params { width: 100%; height: 217px; }
.params th { height: 16px; padding-left: 2px; text-align: left; }
.params th:first-child { width: 215px; }
.params td { padding-left: 2px; border-bottom: 1px solid #e6e6e6; border-left: 1px solid #e6e6e6; }
.params td:first-child { padding-left: 1px; border-left: 0; }
.params tbody tr:nth-child(even) { background: #e9e9e9; }
.params td svg { display: inline-block; width: 13px; height: 13px; margin-right: 2px; vertical-align: -3px; }
.params svg text { font-size: 7px; font-weight: 700; text-anchor: middle; }
.f-str { color: #e3d066; } .f-str text { fill: #6b5a0c; }
.f-dbl { color: #7bd6e3; } .params .f-dbl text { fill: #14707f; font-size: 9px; font-weight: 400; }
.f-int { color: #7db2e6; } .params .f-int text { fill: #123c78; font-size: 6px; }
.f-bool { color: #69dc70; }
.page-actions { display: flex; flex-direction: column; justify-content: flex-end; gap: 10px; width: 96px; }
.btn { height: 21px; border: 1px solid #dedede; border-radius: 1px; background: #fdfdfd; }
.page-actions .btn:last-child { margin-bottom: 2px; }
.dlg-foot { display: flex; justify-content: flex-end; gap: 6px; padding: 2px 1px 0 0; }
.dlg-foot .btn { width: 69px; }
.dlg-foot .primary { border-color: #7fb4e0; }
.brand { position: absolute; left: 88px; bottom: 4px; display: flex; align-items: center; gap: 4px; color: #0b4fe0; font-family: "Noto Sans CJK SC", sans-serif; font-weight: 700; }
.brand svg { width: 37px; height: 32px; }
.brand div { display: flex; flex-direction: column; }
.brand strong { padding-left: 12px; font-size: 26px; line-height: 24px; }
.brand span { font-size: 14px; line-height: 16px; color: #0a45c4; }
```
